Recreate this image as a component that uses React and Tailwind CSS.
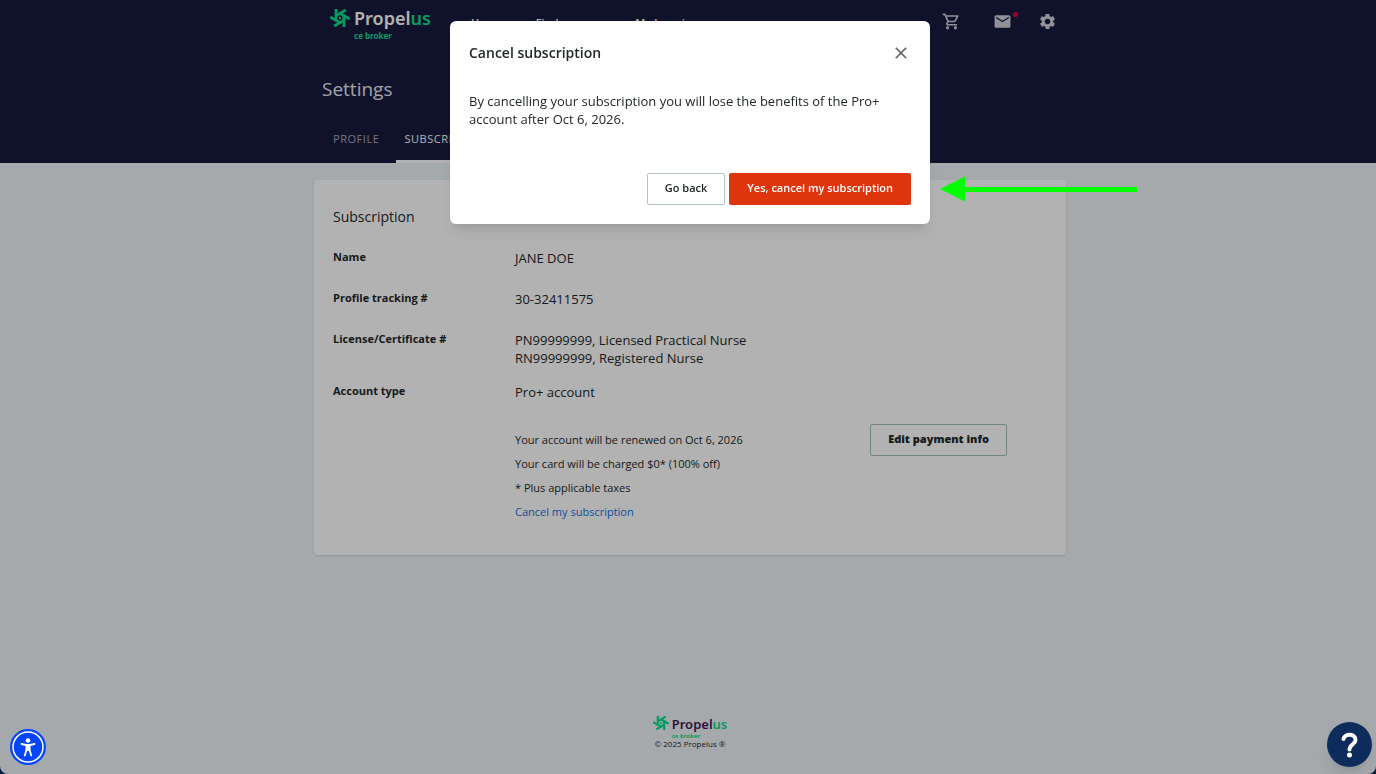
import clsx from 'clsx';
import { MdClose, MdEmail, MdOutlineShoppingCart, MdSettings } from 'react-icons/md';

const navLinks = ['Home', 'Find courses', 'My learning'];

const tabs = [
  { label: 'Profile', active: false },
  { label: 'Subscription', active: true },
];

const details = [
  { label: 'Name', values: ['JANE DOE'] },
  { label: 'Profile tracking #', values: ['30-32411575'] },
  {
    label: 'License/Certificate #',
    values: ['PN99999999, Licensed Practical Nurse', 'RN99999999, Registered Nurse'],
  },
  { label: 'Account type', values: ['Pro+ account'] },
];

const LogoMark = ({ className }) => (
  <svg viewBox="0 0 40 40" className={className} fill="none" aria-hidden="true">
    {[30, 90, 150, 210, 270, 330].map((angle) => (
      <path key={angle} d="M15 12 H38" stroke="currentColor" strokeWidth="5.5" transform={`rotate(${angle} 20 20)`} />
    ))}
    <path d="M18 16.5 L24 20 L18 23.5 Z" fill="currentColor" />
  </svg>
);

const Logo = ({ small }) => (
  <div className={clsx('flex font-[Noto_Sans,sans-serif] text-[#0cdc8c]', small ? 'gap-[3px]' : 'gap-1')}>
    <LogoMark className={small ? 'size-4' : 'size-5'} />
    <div>
      <div
        className={clsx(
          'font-semibold',
          small ? 'text-[13px] leading-[18px] text-[#451655]' : 'text-[18px] leading-5 text-white'
        )}
      >
        Propel<span className="text-[#0cdc8c]">us</span>
      </div>
      <div className={clsx('font-bold', small ? 'text-[6px] leading-[6px]' : 'text-[8px] leading-4')}>
        ce broker
      </div>
    </div>
  </div>
);

const Header = () => (
  <header className="bg-[#181b40] pl-1 text-white">
    <div className="mx-auto flex h-[163px] w-full max-w-[752px] flex-col">
      <div className="flex items-start pt-2 pr-[9px] pl-4">
        <Logo />
        <nav className="ml-10 flex gap-[33px] pt-[7px] text-[11px] leading-4 font-semibold">
          {navLinks.map((link) => (
            <a key={link} href="#">
              {link}
            </a>
          ))}
        </nav>
        <div className="ml-auto flex items-center pt-1 text-[#d2d0d8]">
          <button aria-label="Cart" className="mr-8">
            <MdOutlineShoppingCart className="size-[19px]" />
          </button>
          <button aria-label="Messages" className="relative mr-[26px]">
            <MdEmail className="size-[19px]" />
            <span className="absolute top-0 -right-[6px] size-[5px] rounded-full bg-[#ea003c]" />
          </button>
          <button aria-label="Settings">
            <MdSettings className="size-[19px]" />
          </button>
        </div>
      </div>
      <h1 className="mt-[31px] pl-2 text-[19px] leading-7 text-white/90">Settings</h1>
      <div className="mt-auto flex gap-[9px] pl-[11px] text-[11px] font-medium tracking-wider uppercase">
        {tabs.map((tab) => (
          <a
            key={tab.label}
            href="#"
            className={clsx(
              'border-b-3 px-2 pt-3 pb-[13px] leading-4',
              tab.active ? 'border-white text-white' : 'border-transparent text-[#a9a9b8]'
            )}
          >
            {tab.label}
          </a>
        ))}
      </div>
    </div>
  </header>
);

const SubscriptionCard = () => (
  <section className="mx-auto w-full max-w-[752px] rounded-sm bg-white px-[19px] pt-[27px] pb-[31px] shadow">
    <h2 className="mb-[22px] text-[14px] leading-5">Subscription</h2>
    <dl className="flex flex-col gap-4">
      {details.map((row) => (
        <div key={row.label} className="flex min-h-[25px] leading-[18px]">
          <dt className="w-[182px] shrink-0 text-[11px] leading-4 font-bold">{row.label}</dt>
          <dd className="text-[13px]">
            {row.values.map((value) => (
              <div key={value}>{value}</div>
            ))}
          </dd>
        </div>
      ))}
    </dl>
    <div className="mt-4 flex items-start justify-between pr-10 pl-[182px]">
      <div className="pt-1 text-[11px] leading-6">
        <p>Your account will be renewed on Oct 6, 2026</p>
        <p>Your card will be charged $0* (100% off)</p>
        <p>* Plus applicable taxes</p>
        <a href="#" className="block text-[#0f72dc]">
          Cancel my subscription
        </a>
      </div>
      <button className="h-8 rounded-xs border border-[#9fc0b8] px-[17px] pb-[2px] text-[11px] font-extrabold">
        Edit payment info
      </button>
    </div>
  </section>
);

const Arrow = () => (
  <svg viewBox="0 0 198 26" className="absolute top-[155px] left-full ml-[10px] h-[26px] w-[198px]" aria-hidden="true">
    <path d="M0 13 L25 0.5 V11 H197 V16 H25 V25.5 Z" fill="#00ff00" />
  </svg>
);

const CancelDialog = () => (
  <div className="fixed inset-0 flex items-start justify-center bg-black/30 pt-[21px] pl-1">
    <div
      role="dialog"
      aria-labelledby="cancel-title"
      className="relative w-full max-w-[480px] rounded-md bg-white px-[19px] pt-5 pb-[19px] shadow-lg"
    >
      <div className="flex items-center justify-between">
        <h2 id="cancel-title" className="text-[14px] leading-6 font-semibold">
          Cancel subscription
        </h2>
        <button aria-label="Close" className="text-[#666]">
          <MdClose className="size-5" />
        </button>
      </div>
      <p className="mt-[27px] text-[13px] leading-[18px]">
        By cancelling your subscription you will lose the benefits of the Pro+ account after Oct 6, 2026.
      </p>
      <div className="mt-[45px] flex justify-end gap-1 text-[11px] font-semibold">
        <button className="h-8 rounded-xs border border-[#b4c4c6] px-[17px] pb-[2px]">Go back</button>
        <button className="h-8 rounded-xs bg-[#df350d] px-[18px] pb-[2px] text-white">Yes, cancel my subscription</button>
      </div>
      <Arrow />
    </div>
  </div>
);

const AccessibilityButton = () => (
  <button aria-label="Accessibility" className="fixed bottom-[9px] left-[10px] size-9">
    <svg viewBox="0 0 36 36" className="size-9">
      <circle cx="18" cy="18" r="18" fill="#0546fb" />
      <circle cx="18" cy="18" r="15" fill="none" stroke="#fff" strokeWidth="1.5" />
      <circle cx="18" cy="11.5" r="2.3" fill="#fff" />
      <path
        d="M11.5 15 L16 16 H20 L24.5 15 M18 16 V21 M16.7 20 L14.8 26.5 M19.3 20 L21.2 26.5"
        fill="none"
        stroke="#fff"
        strokeWidth="1.8"
        strokeLinecap="round"
      />
      <path d="M15.5 15.3 H20.5 V21.5 H15.5 Z" fill="#fff" />
    </svg>
  </button>
);

const HelpButton = () => (
  <button aria-label="Help" className="fixed right-1 bottom-[7px] size-[45px] rounded-full bg-[#0d2c5c] shadow-lg">
    <svg viewBox="0 0 45 45" className="size-[45px]" fill="none">
      <path
        d="M16.5 17 C17.5 11 29 11.5 28.5 18 C28.3 22.5 22.5 22.5 22.5 27.5"
        stroke="#fff"
        strokeWidth="4"
        strokeLinecap="round"
      />
      <circle cx="22.5" cy="33" r="2.5" fill="#fff" />
    </svg>
  </button>
);

export default function App() {
  return (
    <div className="bg-[#0c2a5a] font-[Open_Sans,sans-serif] text-[#222828]">
      <div className="flex min-h-screen flex-col overflow-hidden rounded-b-lg bg-[#edf3f7]">
        <Header />
        <main className="pt-[17px] pl-1">
          <SubscriptionCard />
        </main>
        <footer className="mt-auto flex flex-col items-center pt-8 pb-[25px] pl-1">
          <Logo small />
          <p className="text-[8px] leading-[10px]">© 2025 Propelus ®</p>
        </footer>
      </div>
      <CancelDialog />
      <AccessibilityButton />
      <HelpButton />
    </div>
  );
}
